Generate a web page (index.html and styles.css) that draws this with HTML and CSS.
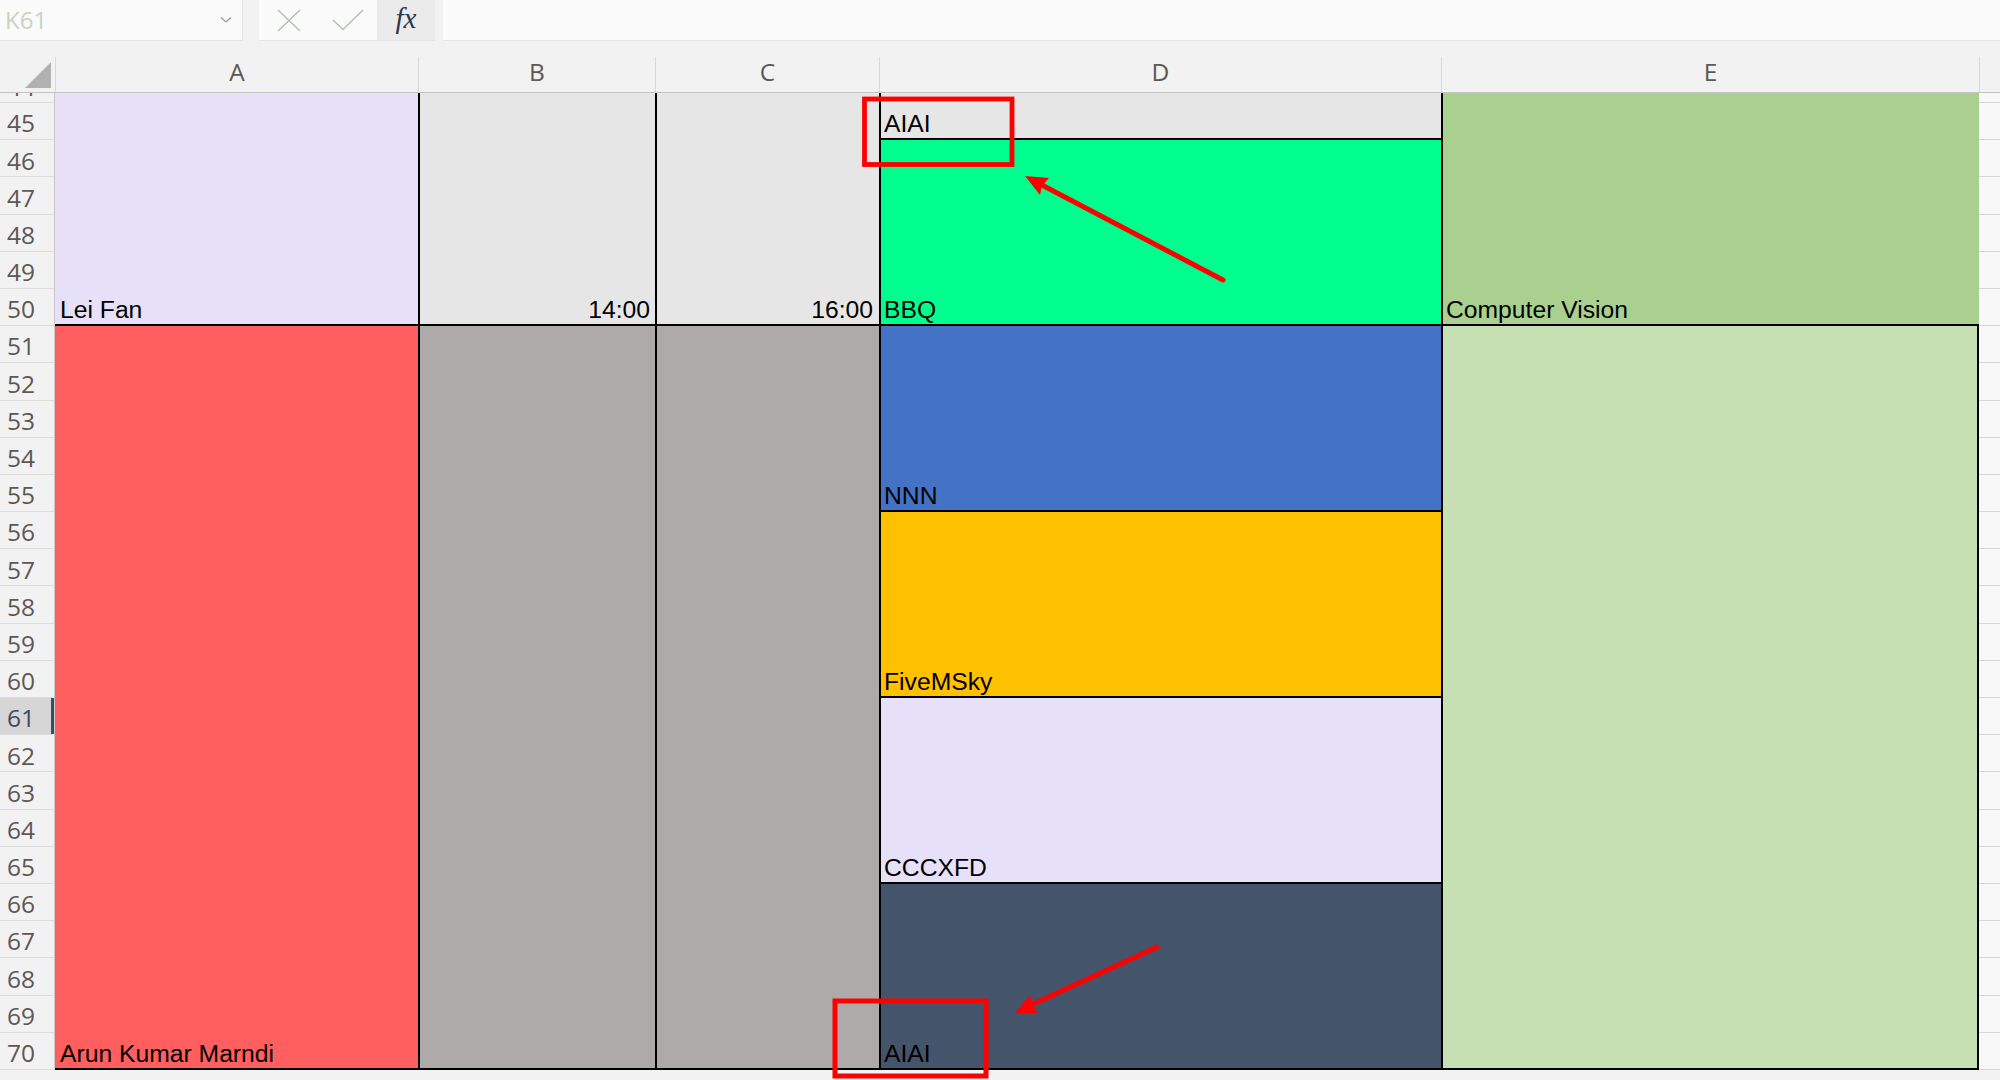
FILE: index.html
```html
<!DOCTYPE html>
<html>
<head>
<meta charset="utf-8">
<title>Sheet</title>
<link rel="stylesheet" href="styles.css">
</head>
<body>
<div class="app">
  <div class="formula-bar">
    <div class="name-box">
      <span class="ref">K61</span>
      <svg class="chev" width="12" height="8" viewBox="0 0 12 8"><path d="M1 1.5 L6 6 L11 1.5" fill="none" stroke="#9b9b9b" stroke-width="1.3"/></svg>
    </div>
    <div class="fx-buttons">
      <div class="btn"><svg width="24" height="23" viewBox="0 0 24 23"><path d="M1 1 L23 22 M23 1 L1 22" stroke="#b5c0b2" stroke-width="1.5" fill="none"/></svg></div>
      <div class="btn"><svg width="32" height="22" viewBox="0 0 32 22"><path d="M1 11 L11 20.5 L31 1" stroke="#b5c0b2" stroke-width="1.5" fill="none"/></svg></div>
      <div class="btn fx"><span>fx</span></div>
    </div>
    <div class="formula-input"></div>
  </div>

  <div class="col-headers">
    <div class="corner"><svg width="26" height="26" viewBox="0 0 26 26"><polygon points="0,26 26,26 26,0" fill="#b2b2b2"/></svg></div>
    <div class="ch">A</div>
    <div class="ch">B</div>
    <div class="ch">C</div>
    <div class="ch">D</div>
    <div class="ch">E</div>
    <div class="ch"></div>
  </div>

  <div class="sheet-body">
    <div class="row-headers">
      <div class="rh partial"><span>44</span></div>
      <div class="rh"><span>45</span></div>
      <div class="rh"><span>46</span></div>
      <div class="rh"><span>47</span></div>
      <div class="rh"><span>48</span></div>
      <div class="rh"><span>49</span></div>
      <div class="rh"><span>50</span></div>
      <div class="rh"><span>51</span></div>
      <div class="rh"><span>52</span></div>
      <div class="rh"><span>53</span></div>
      <div class="rh"><span>54</span></div>
      <div class="rh"><span>55</span></div>
      <div class="rh"><span>56</span></div>
      <div class="rh"><span>57</span></div>
      <div class="rh"><span>58</span></div>
      <div class="rh"><span>59</span></div>
      <div class="rh"><span>60</span></div>
      <div class="rh selected"><span>61</span></div>
      <div class="rh"><span>62</span></div>
      <div class="rh"><span>63</span></div>
      <div class="rh"><span>64</span></div>
      <div class="rh"><span>65</span></div>
      <div class="rh"><span>66</span></div>
      <div class="rh"><span>67</span></div>
      <div class="rh"><span>68</span></div>
      <div class="rh"><span>69</span></div>
      <div class="rh"><span>70</span></div>
    </div>

    <div class="cells">
      <div class="cell a-top lavender">Lei Fan</div>
      <div class="cell b-top lightgray right">14:00</div>
      <div class="cell c-top lightgray right">16:00</div>
      <div class="cell d-aiai lightgray">AIAI</div>
      <div class="cell d-bbq mint">BBQ</div>
      <div class="cell e-top sage">Computer Vision</div>

      <div class="cell a-bot coral">Arun Kumar Marndi</div>
      <div class="cell b-bot taupe"></div>
      <div class="cell c-bot taupe"></div>
      <div class="cell d-nnn blue">NNN</div>
      <div class="cell d-five amber">FiveMSky</div>
      <div class="cell d-ccc lavender">CCCXFD</div>
      <div class="cell d-aiai2 slate">AIAI</div>
      <div class="cell e-bot palegreen"></div>
    </div>

    <div class="spare">
      <div></div><div></div><div></div><div></div><div></div><div></div><div></div><div></div><div></div>
      <div></div><div></div><div></div><div></div><div></div><div></div><div></div><div></div><div></div>
      <div></div><div></div><div></div><div></div><div></div><div></div><div></div><div></div><div></div>
    </div>
  </div>

  <svg class="annotations" width="2000" height="1080" viewBox="0 0 2000 1080">
    <rect x="864.5" y="99" width="147.5" height="65.5" fill="none" stroke="#ff0000" stroke-width="4.8"/>
    <line x1="1223" y1="280" x2="1040" y2="184" stroke="#ff0000" stroke-width="5" stroke-linecap="round"/>
    <polygon points="1025,176 1049,178 1042,186 1040,195" fill="#ff0000"/>
    <rect x="835" y="1001" width="151" height="75" fill="none" stroke="#ff0000" stroke-width="5"/>
    <line x1="1157" y1="947" x2="1031" y2="1005" stroke="#ff0000" stroke-width="5" stroke-linecap="round"/>
    <polygon points="1015,1013 1030,995 1033,1006 1038,1013" fill="#ff0000"/>
  </svg>
</div>
</body>
</html>
```

FILE: styles.css
```css
* { box-sizing: border-box; }

html, body {
  margin: 0;
  padding: 0;
}

body {
  width: 2000px;
  height: 1080px;
  overflow: hidden;
  background: #f2f2f2;
  font-family: "Open Sans", "Noto Sans", sans-serif;
}

.app {
  position: relative;
  width: 2000px;
  height: 1080px;
}

/* ---------- formula bar ---------- */
.formula-bar {
  display: flex;
  height: 41px;
}

.name-box {
  width: 243px;
  height: 41px;
  background: #fafafa;
  border-right: 1px solid #e3e3e3;
  border-bottom: 1px solid #e3e3e3;
  display: flex;
  align-items: center;
  justify-content: space-between;
  padding: 0 10px 0 5px;
}

.name-box .ref {
  color: #c8d3c4;
  font-size: 24px;
  line-height: 1;
}

.fx-buttons {
  margin-left: 16px;
  width: 176px;
  height: 41px;
  display: flex;
  background: #fafafa;
  border-bottom: 1px solid #e6e6e6;
}

.btn {
  width: 59px;
  display: flex;
  align-items: center;
  justify-content: center;
}

.btn.fx {
  width: 58px;
  background: #ebebeb;
  font-family: "Liberation Serif", "DejaVu Serif", serif;
  font-style: italic;
  font-size: 29px;
  color: #2c394d;
  padding-bottom: 4px;
}

.formula-input {
  margin-left: 8px;
  flex: 1;
  height: 41px;
  background: #fafafa;
  border-bottom: 1px solid #e6e6e6;
}

/* ---------- column headers ---------- */
.col-headers {
  margin-top: 16px;
  height: 36px;
  display: grid;
  grid-template-columns: 55px 363px 237px 224px 562px 538px 21px;
  border-bottom: 1px solid #c4c4c4;
}

.corner {
  display: flex;
  align-items: flex-end;
  justify-content: flex-end;
  padding: 0 4px 4px 0;
}

.ch {
  border-left: 1px solid #d9d9d9;
  display: flex;
  align-items: center;
  justify-content: center;
  font-size: 24.5px;
  color: #5c5855;
  line-height: 1;
  padding-bottom: 5px;
}

/* ---------- sheet body ---------- */
.sheet-body {
  display: flex;
  height: 977.2px;
}

.row-headers,
.spare,
.cells {
  display: grid;
  grid-template-rows: 10px repeat(26, 37.2px);
}

.row-headers {
  width: 55px;
  border-right: 1px solid #c9c9c9;
}

.rh {
  display: flex;
  align-items: center;
  padding: 5px 0 0 7px;
  font-size: 24.5px;
  color: #5c5855;
  border-bottom: 1px solid #dcdcdc;
  overflow: hidden;
  line-height: 1;
}

.rh.partial {
  align-items: flex-end;
  padding-top: 0;
}

.rh.partial span {
  display: block;
  line-height: 31px;
  flex: none;
}

.rh.selected {
  background: #d6d6d6;
  color: #3e4a5e;
  box-shadow: inset -3px 0 0 #3d4b63;
}

.spare {
  width: 21px;
}

.spare div {
  background: #f8f8f8;
  border-bottom: 1px solid #d6d6d6;
}

.cells {
  width: 1924px;
  grid-template-columns: 363px 237px 224px 562px 538px;
}

.cell {
  display: flex;
  align-items: flex-end;
  padding: 0 5px 1px 5px;
  font-family: "Liberation Sans", Arial, sans-serif;
  font-size: 24.7px;
  line-height: 1;
  color: #000;
  white-space: nowrap;
}

.cell.right {
  justify-content: flex-end;
}

/* placement */
.a-top  { grid-column: 1; grid-row: 1 / 8;  border-bottom: 2px solid #000; }
.b-top  { grid-column: 2; grid-row: 1 / 8;  border-bottom: 2px solid #000; border-left: 2px solid #000; }
.c-top  { grid-column: 3; grid-row: 1 / 8;  border-bottom: 2px solid #000; border-left: 2px solid #000; padding-right: 6px; }
.d-aiai { grid-column: 4; grid-row: 1 / 3;  border-bottom: 2px solid #000; border-left: 2px solid #000; padding-left: 3px; }
.d-bbq  { grid-column: 4; grid-row: 3 / 8;  border-bottom: 2px solid #000; border-left: 2px solid #000; padding-left: 3px; }
.e-top  { grid-column: 5; grid-row: 1 / 8;  border-bottom: 2px solid #000; border-left: 2px solid #000; padding-left: 3px; }

.a-bot  { grid-column: 1; grid-row: 8 / 28; border-bottom: 2px solid #000; }
.b-bot  { grid-column: 2; grid-row: 8 / 28; border-bottom: 2px solid #000; border-left: 2px solid #000; }
.c-bot  { grid-column: 3; grid-row: 8 / 28; border-bottom: 2px solid #000; border-left: 2px solid #000; }
.d-nnn  { grid-column: 4; grid-row: 8 / 13; border-bottom: 2px solid #000; border-left: 2px solid #000; padding-left: 3px; }
.d-five { grid-column: 4; grid-row: 13 / 18; border-bottom: 2px solid #000; border-left: 2px solid #000; padding-left: 3px; }
.d-ccc  { grid-column: 4; grid-row: 18 / 23; border-bottom: 2px solid #000; border-left: 2px solid #000; padding-left: 3px; }
.d-aiai2 { grid-column: 4; grid-row: 23 / 28; border-bottom: 2px solid #000; border-left: 2px solid #000; padding-left: 3px; }
.e-bot  { grid-column: 5; grid-row: 8 / 28; border-bottom: 2px solid #000; border-left: 2px solid #000; border-right: 2px solid #000; }

/* colours */
.lavender  { background: #e6e0f8; }
.lightgray { background: #e7e6e6; }
.mint      { background: #00fe8f; }
.sage      { background: #a9d08e; }
.coral     { background: #ff5f5f; }
.taupe     { background: #aeaaaa; }
.blue      { background: #4472c4; }
.amber     { background: #ffc000; }
.slate     { background: #44546a; }
.palegreen { background: #c6e0b4; }

/* ---------- annotations ---------- */
.annotations {
  position: absolute;
  left: 0;
  top: 0;
  pointer-events: none;
}
```
